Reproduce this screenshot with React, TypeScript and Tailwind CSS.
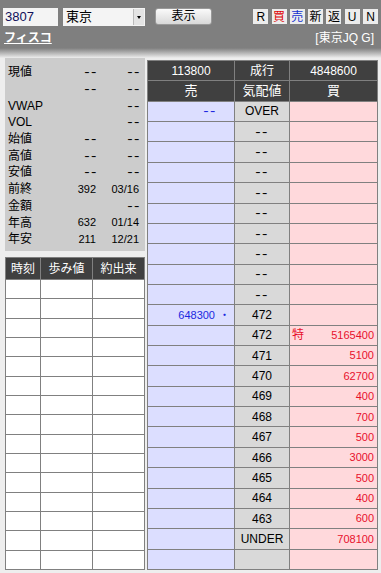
import React from "react";

const FONT = '"Liberation Sans", "Noto Sans CJK JP", sans-serif';

type Row = { sell?: string; mark?: string; price?: string; tok?: string; buy?: string };

const bookRows: Row[] = [
  { sell: "--", price: "OVER" },
  ...Array.from({ length: 9 }, () => ({ price: "--" })),
  { sell: "648300", mark: "・", price: "472" },
  { price: "472", tok: "特", buy: "5165400" },
  { price: "471", buy: "5100" },
  { price: "470", buy: "62700" },
  { price: "469", buy: "400" },
  { price: "468", buy: "700" },
  { price: "467", buy: "500" },
  { price: "466", buy: "3000" },
  { price: "465", buy: "500" },
  { price: "464", buy: "400" },
  { price: "463", buy: "600" },
  { price: "UNDER", buy: "708100" },
  {},
];

const quotes: [string, string, string][] = [
  ["現値", "--", "--"],
  ["", "--", "--"],
  ["VWAP", "", "--"],
  ["VOL", "", "--"],
  ["始値", "--", "--"],
  ["高値", "--", "--"],
  ["安値", "--", "--"],
  ["前終", "392", "03/16"],
  ["金額", "", "--"],
  ["年高", "632", "01/14"],
  ["年安", "211", "12/21"],
];

// the old bitmap font draws "--" as two long dashes
function Dash({ v }: { v: string }) {
  return v === "--" ? (
    <span className="inline-block whitespace-nowrap tracking-[1px] text-[12px] scale-x-[1.35] origin-center">--</span>
  ) : (
    <>{v}</>
  );
}

function TopButton({ label, color }: { label: string; color?: string }) {
  return (
    <div
      className={`w-[15px] h-[15px] bg-[#ececec] flex items-center justify-center text-[12px] leading-none ${color ?? "text-black"}`}
    >
      {label}
    </div>
  );
}

export default function App() {
  return (
    <div className="w-[381px] h-[573px] bg-[#eeeeee] overflow-hidden text-[12px]" style={{ fontFamily: FONT }}>
      {/* top bar */}
      <div className="h-[48px] bg-[#7f7f7f] px-[3px] pt-[8px]">
        <div className="flex items-start">
          <div className="w-[55px] h-[18px] bg-[#f4f4f4] text-[#10105a] text-[13px] leading-[18px] pl-[2px]">3807</div>
          <div className="ml-[5px] w-[82px] h-[18px] bg-[#f4f4f4] flex">
            <div className="flex-1 text-[13px] leading-[18px] pl-[3px]">東京</div>
            <div className="w-[11px] h-[16px] mt-px mr-px bg-[#e4e4e4] border-l border-[#bbb] flex items-center justify-center">
              <div className="w-0 h-0 border-l-[2.5px] border-r-[2.5px] border-t-[3px] border-l-transparent border-r-transparent border-t-black" />
            </div>
          </div>
          <div className="ml-[10px] w-[57px] h-[17px] rounded-[3px] bg-gradient-to-b from-[#fafafa] to-[#d8d8d8] border border-[#999] text-[12px] leading-[15px] text-center">
            表示
          </div>
          <div className="ml-auto mt-px flex gap-[3.3px]">
            <TopButton label="R" />
            <TopButton label="買" color="text-[#e00000]" />
            <TopButton label="売" color="text-[#1030d0]" />
            <TopButton label="新" />
            <TopButton label="返" />
            <TopButton label="U" />
            <TopButton label="N" />
          </div>
        </div>
        <div className="flex justify-between mt-[4px] text-white text-[12px] leading-[16px]">
          <span className="underline font-bold pl-px">フィスコ</span>
          <span className="pr-[4px]">[東京JQ G]</span>
        </div>
      </div>
      <div className="h-[10px] bg-gradient-to-b from-[#7f7f7f] to-[#eeeeee]" />

      <div className="flex pl-[5px]">
        {/* left column */}
        <div className="w-[140px]">
          <div className="h-[193px] bg-[#cccccc] pt-[6px] pl-[3px] pr-[6px]">
            {quotes.map(([a, b, c], i) => (
              <div key={i} className="h-[16.7px] flex items-center leading-none whitespace-nowrap">
                <span className="w-[40px] text-[12px]">{a}</span>
                <span className="w-[48px] text-right text-[11px]">
                  <Dash v={b} />
                </span>
                <span className="flex-1 text-right text-[11px]">
                  <Dash v={c} />
                </span>
              </div>
            ))}
          </div>
          <div className="mt-[6px] grid grid-cols-[34px_51px_1fr] gap-px p-px bg-[#808080]">
            {["時刻", "歩み値", "約出来"].map((h) => (
              <div key={h} className="h-[21px] bg-[#404040] text-white text-[12px] flex items-center justify-center">
                {h}
              </div>
            ))}
            {Array.from({ length: 45 }, (_, i) => (
              <div key={i} className="h-[18.33px] bg-white" />
            ))}
          </div>
        </div>

        {/* order book */}
        <div className="ml-[2px] mt-[2px] w-[231px] grid grid-cols-[86px_54px_87px] gap-px p-px bg-[#808080] text-[11px]">
          {["113800", "成行", "4848600"].map((h) => (
            <div key={h} className="h-[19.36px] bg-[#404040] text-white text-[12px] flex items-center justify-center">
              {h}
            </div>
          ))}
          {["売", "気配値", "買"].map((h) => (
            <div key={h} className="h-[19.36px] bg-[#404040] text-white text-[13px] flex items-center justify-center">
              {h}
            </div>
          ))}
          {bookRows.map((r, i) => (
            <React.Fragment key={i}>
              <div className="h-[19.36px] bg-[#dcdeff] text-[#1a28e0] flex items-center justify-end whitespace-nowrap">
                <span>
                  <Dash v={r.sell ?? ""} />
                </span>
                <span className="w-[19px] text-center">{r.mark}</span>
              </div>
              <div className="h-[19.36px] bg-[#d9d9d9] flex items-center justify-center text-[12px] whitespace-nowrap">
                <Dash v={r.price ?? ""} />
              </div>
              <div className="h-[19.36px] bg-[#ffd9dc] text-[#e8102c] flex items-center pl-[2px] pr-[3px] whitespace-nowrap">
                <span className="text-[12px]">{r.tok}</span>
                <span className="ml-auto">{r.buy}</span>
              </div>
            </React.Fragment>
          ))}
        </div>
      </div>
    </div>
  );
}
